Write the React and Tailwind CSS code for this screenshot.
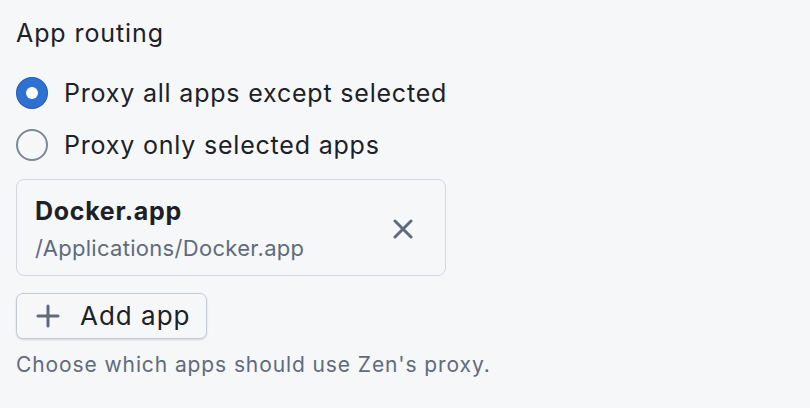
import React, { useState } from 'react';

const apps = [{ name: 'Docker.app', path: '/Applications/Docker.app' }];

const Radio = ({ checked, label, onClick }) => (
  <button type="button" onClick={onClick} className="flex h-[32px] items-center gap-[16px] text-left">
    {checked ? (
      <span className="flex h-[32px] w-[32px] items-center justify-center rounded-full bg-[#2d72d2] shadow-[inset_0_0_0_1px_rgba(17,20,24,0.2)]">
        <span className="h-[12px] w-[12px] rounded-full bg-white" />
      </span>
    ) : (
      <span className="h-[32px] w-[32px] rounded-full border-2 border-[#7d8896] bg-[#f6f7f9]" />
    )}
    <span className="text-[25px] leading-[32px] tracking-[0.8px] text-[#1c2127]">{label}</span>
  </button>
);

const App = () => {
  const [mode, setMode] = useState('except');

  return (
    <div className="min-h-screen bg-[#f6f7f9] px-4 pt-[17px] font-['Inter',sans-serif]">
      <h2 className="text-[25px] leading-[32px] tracking-[0.9px] text-[#1c2127]">App routing</h2>

      <div className="mt-[28px] flex flex-col gap-[20px]">
        <Radio checked={mode === 'except'} label="Proxy all apps except selected" onClick={() => setMode('except')} />
        <Radio checked={mode === 'only'} label="Proxy only selected apps" onClick={() => setMode('only')} />
      </div>

      <div className="mt-[18px] flex w-[430px] flex-col">
        {apps.map((app) => (
          <div key={app.path} className="flex items-center justify-between rounded-[8px] border border-[#d3d8de] bg-[#f6f7f9] pb-[13px] pl-[18px] pr-[32px] pt-[16px]">
            <div>
              <div className="text-[25px] font-bold leading-[30px] tracking-[0.7px] text-[#1c2127]">{app.name}</div>
              <div className="mt-2 text-[22px] leading-[28px] tracking-[0.3px] text-[#5f6b7c]">{app.path}</div>
            </div>
            <svg width="20" height="20" viewBox="0 0 20 20" className="text-[#5f6b7c]">
              <path d="M2 2 L18 18 M18 2 L2 18" stroke="currentColor" strokeWidth="3" strokeLinecap="round" />
            </svg>
          </div>
        ))}
      </div>

      <button
        type="button"
        className="mt-[17px] flex h-[46px] w-[191px] items-center gap-[20px] rounded-[7px] border border-[#c5cbd3] bg-[#f6f7f9] pl-[19px] shadow-[0_1px_2px_rgba(17,20,24,0.15)]"
      >
        <svg width="24" height="24" viewBox="0 0 24 24" className="text-[#5f6b7c]">
          <path d="M12 2 V22 M2 12 H22" stroke="currentColor" strokeWidth="3" strokeLinecap="round" />
        </svg>
        <span className="text-[26px] leading-[32px] tracking-[1px] text-[#1c2127]">Add app</span>
      </button>

      <p className="mt-[12px] text-[21px] leading-[28px] tracking-[0.9px] text-[#5f6b7c]">Choose which apps should use Zen's proxy.</p>
    </div>
  );
};

export default App;
